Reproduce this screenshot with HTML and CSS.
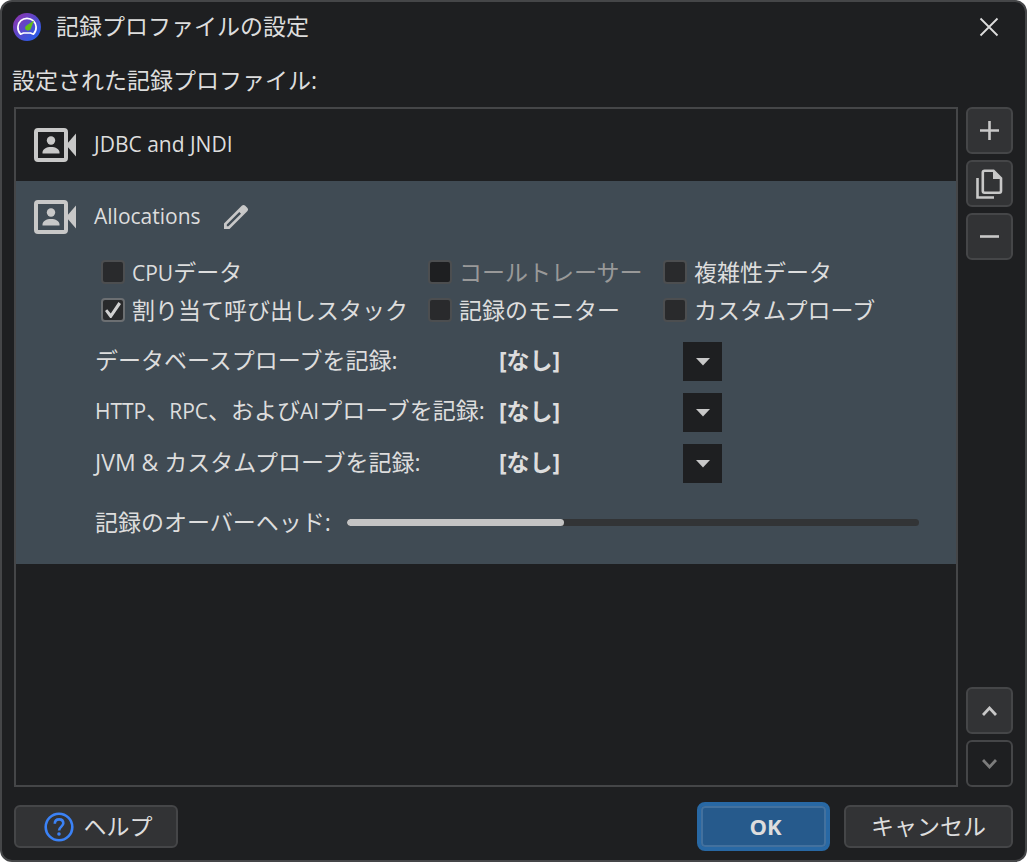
FILE: index.html
```html
<!DOCTYPE html>
<html lang="ja">
<head>
  <meta charset="UTF-8" />
  <meta name="viewport" content="width=device-width, initial-scale=1.0" />
  <title>記録プロファイルの設定</title>
  <link rel="stylesheet" href="styles.css">
</head>
<body>

  <!-- Shared icons -->
  <svg class="icon-defs" width="0" height="0" aria-hidden="true">
    <symbol id="icon-profile" viewBox="0 0 42 34">
      <rect x="2" y="2" width="30" height="30" rx="2" fill="none" stroke="currentColor" stroke-width="4" />
      <circle cx="17" cy="12.500" r="4.200" fill="currentColor" />
      <path d="M8.500 25.500v-1c0-3.500 4-5.500 8.500-5.500s8.500 2 8.500 5.500v1z" fill="currentColor" />
      <path d="M32 17l10-11.500v23z" fill="currentColor" />
    </symbol>
    <symbol id="icon-arrow" viewBox="0 0 14 8">
      <path d="M0 0h14l-7 7.500z" fill="currentColor" />
    </symbol>
  </svg>

  <div class="dialog">
    <header class="titlebar">
      <svg class="app-icon" viewBox="0 0 28 28" aria-hidden="true">
        <defs>
          <linearGradient id="logo" x1="0" y1="0" x2="1" y2="1">
            <stop offset="0.150" stop-color="#8338b4" />
            <stop offset="0.850" stop-color="#2b5be6" />
          </linearGradient>
        </defs>
        <circle cx="14" cy="14" r="14" fill="url(#logo)" />
        <path d="M7.500 21.200C5.300 19 4.700 16.500 4.900 13.800 5.400 8.800 9.200 5.400 14 5.400s8.600 3.400 9.100 8.400c.2 2.700-.4 5.200-2.600 7.400l-3-1.200h-7z" fill="none" stroke="#fff" stroke-width="1.700" stroke-linejoin="round" />
        <path d="M21 7.500l-3.200 8.500c-1.200 2.200-5 1.800-5.600-.3-.4-1.500.3-2.600 1.600-3.400z" fill="#62bd19" />
      </svg>
      <h1>記録プロファイルの設定</h1>
      <button type="button" class="close-btn" aria-label="閉じる">
        <svg width="20" height="20" viewBox="0 0 20 20"><path d="M1.500 1.500l17 17M18.500 1.500l-17 17" stroke="currentColor" stroke-width="1.800" /></svg>
      </button>
    </header>

    <h2 class="list-label">設定された記録プロファイル:</h2>

    <main class="content">
      <ul class="profile-list">
        <li class="profile">
          <div class="profile-head">
            <svg class="profile-icon"><use href="#icon-profile" /></svg>
            <span class="profile-name">JDBC and JNDI</span>
          </div>
        </li>

        <li class="profile selected">
          <div class="profile-head">
            <svg class="profile-icon"><use href="#icon-profile" /></svg>
            <span class="profile-name">Allocations</span>
            <button type="button" class="edit-btn" aria-label="編集">
              <svg width="26" height="26" viewBox="0 0 26 26"><path fill-rule="evenodd" d="M1 25v-5.500L19 1.500q1.500-1.200 3 0l2.500 2.500q1.200 1.500 0 3L6.500 25zM3.800 22.300h1.600L18 9.700 16.300 8 3.800 20.500z" fill="currentColor" /></svg>
            </button>
          </div>

          <div class="options">
            <label><input type="checkbox"><span><span class="latin">CPU</span>データ</span></label>
            <label class="disabled"><input type="checkbox" disabled>コールトレーサー</label>
            <label><input type="checkbox">複雑性データ</label>
            <label><input type="checkbox" checked>割り当て呼び出しスタック</label>
            <label><input type="checkbox">記録のモニター</label>
            <label><input type="checkbox">カスタムプローブ</label>
          </div>

          <div class="probes">
            <label for="dbProbes">データベースプローブを記録:</label>
            <div class="dropdown">
              <select id="dbProbes"><option>[なし]</option></select>
              <span class="arrow"><svg width="14" height="8"><use href="#icon-arrow" /></svg></span>
            </div>
            <label for="httpProbes"><span class="latin">HTTP</span>、<span class="latin">RPC</span>、および<span class="latin">AI</span>プローブを記録:</label>
            <div class="dropdown">
              <select id="httpProbes"><option>[なし]</option></select>
              <span class="arrow"><svg width="14" height="8"><use href="#icon-arrow" /></svg></span>
            </div>
            <label for="jvmProbes">JVM &amp; カスタムプローブを記録:</label>
            <div class="dropdown">
              <select id="jvmProbes"><option>[なし]</option></select>
              <span class="arrow"><svg width="14" height="8"><use href="#icon-arrow" /></svg></span>
            </div>
          </div>

          <div class="overhead">
            <label for="overhead">記録のオーバーヘッド:</label>
            <progress id="overhead" value="38" max="100"></progress>
          </div>
        </li>
      </ul>

      <div class="toolbar">
        <button type="button" class="tool-btn" aria-label="追加">
          <svg width="19" height="19" viewBox="0 0 19 19"><path d="M0 9.500h19M9.500 0v19" stroke="currentColor" stroke-width="2.600" /></svg>
        </button>
        <button type="button" class="tool-btn" aria-label="複製">
          <svg width="27" height="30" viewBox="0 0 27 30"><g fill="none" stroke="currentColor" stroke-width="2.600"><path d="M8.500 1.800h9L25 9.300V22q0 1.700-1.700 1.700H8.500Q6.800 23.700 6.800 22V3.500q0-1.700 1.700-1.700z" /><path d="M1.500 9v19.500H18" /></g><path d="M17 1.500V10h8.500z" fill="currentColor" /></svg>
        </button>
        <button type="button" class="tool-btn" aria-label="削除">
          <svg width="19" height="19" viewBox="0 0 19 19"><path d="M0 9.500h19" stroke="currentColor" stroke-width="2.600" /></svg>
        </button>
        <button type="button" class="tool-btn move-up" aria-label="上へ">
          <svg width="15" height="10" viewBox="0 0 15 10"><path d="M1 9l6.500-7L14 9" fill="none" stroke="currentColor" stroke-width="2.800" /></svg>
        </button>
        <button type="button" class="tool-btn" aria-label="下へ" disabled>
          <svg width="15" height="10" viewBox="0 0 15 10"><path d="M1 1l6.500 7L14 1" fill="none" stroke="currentColor" stroke-width="2.800" /></svg>
        </button>
      </div>
    </main>

    <footer class="buttons">
      <button type="button" class="btn help-btn">
        <svg width="30" height="30" viewBox="0 0 30 30" fill="none" stroke="#3b82f6"><circle cx="15" cy="15" r="13.300" stroke-width="2.600" /><path d="M10.800 11.800c0-2.700 1.800-4.400 4.300-4.400s4.200 1.600 4.200 3.900c0 3.200-4.200 3.500-4.200 7.200" stroke-width="2.600" /><circle cx="15" cy="22" r="1.800" fill="#3b82f6" stroke="none" /></svg>
        <span>ヘルプ</span>
      </button>
      <button type="submit" class="btn ok-btn"><span>OK</span></button>
      <button type="button" class="btn cancel-btn"><span>キャンセル</span></button>
    </footer>
  </div>

</body>
</html>
```
FILE: styles.css
```css
* {
  box-sizing: border-box;
}

body {
  margin: 0;
  background: #fff;
  color: #dddddd;
  font-family: "Open Sans", "Noto Sans CJK JP", sans-serif;
  font-size: 23px;
  line-height: 30px;
}

button,
select {
  font: inherit;
  color: inherit;
  padding: 0;
  cursor: pointer;
}

svg {
  display: block;
  flex: none;
}

.icon-defs {
  position: absolute;
}

/* Latin letters run large beside the kana */
.latin {
  font-size: 21px;
}

.dialog {
  display: flex;
  flex-direction: column;
  min-height: 100vh;
  background: #1e1f21;
  border: 2px solid #454648;
  border-radius: 12px;
}

.titlebar {
  display: flex;
  align-items: center;
  height: 50px;
  padding: 0 26px 0 11px;
}

.app-icon {
  width: 28px;
  height: 28px;
  margin-right: 15px;
}

h1,
h2 {
  margin: 0;
  font-size: 23px;
  font-weight: normal;
}

h1 {
  padding-bottom: 2px;
}

.close-btn {
  margin-left: auto;
  background: none;
  border: none;
}

.list-label {
  padding: 13px 10px 12px;
}

.content {
  flex: 1;
  display: flex;
  gap: 8px;
  padding: 0 12px;
}

/* Profile list */
.profile-list {
  flex: 1;
  margin: 0;
  padding: 0;
  list-style: none;
  border: 2px solid #454648;
}

.profile.selected {
  background: #404b54;
  padding-bottom: 9px;
}

.profile-head {
  display: flex;
  align-items: center;
  height: 72px;
  padding: 0 18px;
  color: #c8c8c8;
}

.profile-icon {
  width: 42px;
  height: 34px;
}

.profile-name {
  margin-left: 18px;
  padding-bottom: 2px;
  color: #dddddd;
  font-size: 21px;
}

.edit-btn {
  margin-left: 22px;
  background: none;
  border: none;
}

.options {
  display: grid;
  grid-template-columns: 327px 235px 1fr;
  grid-auto-rows: 38px;
  margin-left: 85px;
}

.options label {
  display: flex;
  align-items: center;
  gap: 7px;
  white-space: nowrap;
}

.options .disabled {
  color: #999999;
}

.options input {
  appearance: none;
  flex: none;
  display: grid;
  place-items: center;
  width: 24px;
  height: 24px;
  margin: 0;
  background: #292a2c;
  border: 2px solid #4c4e50;
  border-radius: 4px;
}

.options input:disabled {
  background: #1e1f21;
}

.options input:checked {
  border-color: #6c6f72;
}

.options input:checked::before {
  content: "";
  width: 16px;
  height: 16px;
  background: #d0d0d0;
  clip-path: polygon(0 56%, 14% 46%, 36% 72%, 84% 0, 100% 12%, 40% 100%, 32% 100%);
}

.probes {
  display: grid;
  grid-template-columns: 404px 223px;
  grid-auto-rows: 51px;
  align-items: center;
  margin: 7px 0 0 79px;
  white-space: nowrap;
}

.probes label,
.dropdown select {
  padding-bottom: 4px;
}

/* value text on the left, arrow box laid over the right end */
.dropdown {
  display: grid;
}

.dropdown select,
.dropdown .arrow {
  grid-area: 1 / 1;
}

.dropdown select {
  appearance: none;
  background: none;
  border: none;
  font-weight: bold;
  height: 39px;
}

.dropdown .arrow {
  justify-self: end;
  display: grid;
  place-items: center;
  width: 39px;
  height: 39px;
  background: #1e1f21;
  color: #c8c8c8;
  pointer-events: none;
}

.overhead {
  display: flex;
  align-items: center;
  gap: 16px;
  height: 66px;
  padding: 0 37px 0 79px;
}

progress {
  appearance: none;
  flex: 1;
  height: 7px;
  border: none;
  border-radius: 4px;
  overflow: hidden;
}

progress::-webkit-progress-bar {
  background: #323436;
}

progress::-webkit-progress-value {
  background: #c4c4c4;
  border-radius: 4px;
}

/* Buttons right of the list */
.toolbar {
  display: flex;
  flex-direction: column;
  gap: 6px;
}

.tool-btn,
.btn {
  display: flex;
  align-items: center;
  justify-content: center;
  background: #323335;
  border: 2px solid #454648;
  border-radius: 6px;
}

.tool-btn {
  width: 47px;
  height: 47px;
  color: #c8c8c8;
}

.tool-btn:disabled {
  background: #1e1f21;
  color: #7c7c7c;
}

.move-up {
  margin-top: auto;
}

/* Footer */
.buttons {
  display: flex;
  align-items: center;
  padding: 15px 12px 9px;
}

.btn {
  height: 43px;
}

.btn span {
  padding-bottom: 2px;
}

.help-btn {
  width: 164px;
  gap: 10px;
  padding-left: 4px;
  margin-right: auto;
}

.ok-btn {
  width: 133px;
  height: 49px;
  margin-right: 14px;
  padding-left: 4px;
  background: #265a8c;
  border: 4px solid #2868a4;
  border-radius: 8px;
  box-shadow: inset 0 0 0 2px #43719e;
  font-size: 22px;
  font-weight: bold;
}

.cancel-btn {
  width: 169px;
}
```
